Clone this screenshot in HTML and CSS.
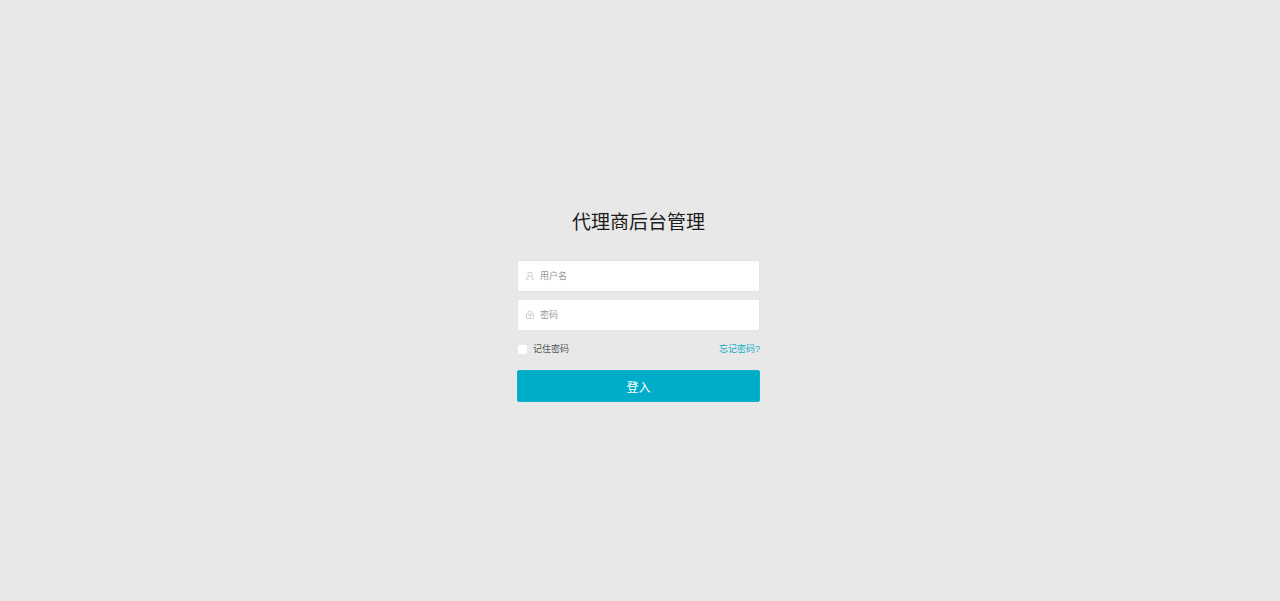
FILE: index.html
```html
<!DOCTYPE html>
<html lang="zh-CN">
<head>
<meta charset="utf-8">
<meta name="viewport" content="width=device-width, initial-scale=1">
<title>代理商后台管理</title>
<link rel="stylesheet" href="styles.css">
</head>
<body>
<main class="login">
  <h1 class="login-title">代理商后台管理</h1>
  <form class="login-form">
    <div class="field">
      <svg class="field-icon" viewBox="0 0 10 10" aria-hidden="true"><path d="M3 1.500h4v3.500H3zM3.500 5v1L1.500 7v1.500h2M6.500 5v1L8.500 7v1.500h-2"/></svg>
      <input class="field-input" type="text" placeholder="用户名" aria-label="用户名">
    </div>
    <div class="field">
      <svg class="field-icon" viewBox="0 0 10 10" aria-hidden="true"><path d="M1.500 4h7v4.500h-7zM3 4V2.500Q3 1 5 1t2 1.500V4M5 5v3M3.500 5.500h3"/></svg>
      <input class="field-input" type="password" placeholder="密码" aria-label="密码">
    </div>
    <div class="options">
      <label class="remember"><input class="remember-box" type="checkbox">记住密码</label>
      <a class="forgot" href="#">忘记密码?</a>
    </div>
    <button class="submit" type="submit">登入</button>
  </form>
</main>
</body>
</html>
```
FILE: styles.css
```css
* {
  box-sizing: border-box;
}

body {
  margin: 0;
  min-height: 100vh;
  padding: 9px 3px 0 0;
  display: flex;
  align-items: center;
  justify-content: center;
  background: #e8e8e8;
  color: #1c1c1c;
  font-family: "Liberation Sans", "Noto Sans CJK SC", sans-serif;
}

.login {
  width: 243px;
  max-width: 100%;
}

.login-title {
  margin: 0 0 22px;
  font-size: 19px;
  line-height: 30px;
  font-weight: 400;
  text-align: center;
}

.login-form {
  display: flex;
  flex-direction: column;
}

.field {
  display: flex;
  align-items: center;
  gap: 5px;
  height: 32px;
  padding: 0 7px;
  background: #fff;
  border: 1px solid #e4e4e4;
  border-radius: 2px;
}

.field + .field {
  margin-top: 7px;
}

.field-icon {
  flex: none;
  width: 10px;
  height: 10px;
  fill: none;
  stroke: #c8c8c8;
  stroke-width: 0.8;
}

.field-input {
  flex: 1;
  min-width: 0;
  padding: 0;
  border: 0;
  outline: 0;
  background: transparent;
  color: #333;
  font-family: inherit;
  font-size: 9px;
  line-height: 20px;
}

.field-input::placeholder {
  color: #999;
}

.options {
  display: flex;
  align-items: center;
  justify-content: space-between;
  margin: 8px 0 11px;
  font-size: 9px;
  line-height: 20px;
}

.remember {
  display: flex;
  align-items: center;
  gap: 6px;
  color: #555;
}

.remember-box {
  appearance: none;
  width: 9px;
  height: 9px;
  margin: 0 0 0 1px;
  background: #fff;
  border-radius: 1px;
}

.remember-box:checked {
  background: #00adc9;
}

.forgot {
  color: #12adc7;
  text-decoration: none;
}

.submit {
  height: 32px;
  padding: 0;
  border: 1px solid #14b0ca;
  border-radius: 2px;
  background: #00adc9;
  color: #fff;
  font-family: inherit;
  font-size: 12px;
}
```
